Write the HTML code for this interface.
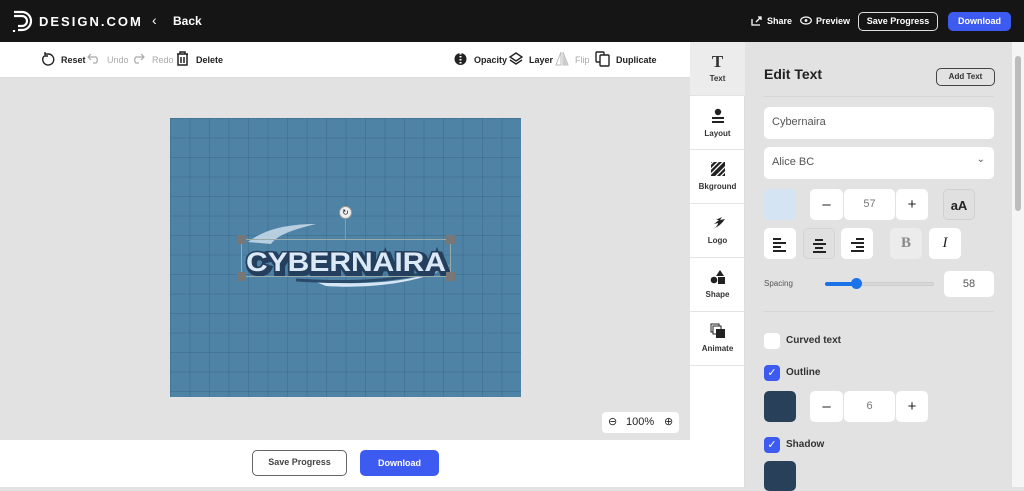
<!DOCTYPE html>
<html><head><meta charset="utf-8"><style>
*{box-sizing:border-box;margin:0;padding:0}
body{width:1024px;height:487px;overflow:hidden;font-family:"Liberation Sans",sans-serif;background:#e2e2e2;position:relative;font-size:11px;color:#222}
.a{position:absolute}
.top{left:0;top:0;width:1024px;height:42px;background:#151515;color:#fff}
.tb{left:0;top:42px;width:690px;height:36px;background:#fff;border-bottom:1px solid #ddd}
.tb span{position:absolute;top:13px;font-size:9px;font-weight:bold}
.canvas{left:170px;top:118px;width:351px;height:279px;background-color:#4f83a6;background-image:linear-gradient(rgba(40,80,110,.25) 1px,transparent 1px),linear-gradient(90deg,rgba(40,80,110,.25) 1px,transparent 1px);background-size:19.5px 19.5px}
.bot{left:0;top:440px;width:690px;height:47px;background:#fff}
.side{left:690px;top:42px;width:55px;height:445px;background:#fff;border-right:1px solid #ddd}
.tab{position:absolute;left:0;width:55px;height:54px;border-bottom:1px solid #e3e3e3;text-align:center;font-size:8px;font-weight:bold;color:#333}
.panel{left:745px;top:42px;width:267px;height:445px;background:#e2e2e2}
.box{position:absolute;background:#fff;border-radius:5px}
.btn{position:absolute;background:#fff;border-radius:5px;text-align:center;font-size:15px}
.cb{position:absolute;width:16px;height:16px;border-radius:4px;background:#3d5af1;color:#fff;font-size:11px;text-align:center;line-height:16px}
.al{position:absolute;left:9px;height:1.5px;background:#222}
</style></head><body>
<div class="a top">
 <svg class="a" style="left:12px;top:10px" width="22" height="24" viewBox="0 0 22 24"><path d="M2 2h8a9 9 0 0 1 0 18H6M2 6h8a5 5 0 0 1 0 10H6M2 20v2" fill="none" stroke="#fff" stroke-width="2.2"/></svg>
 <div class="a" style="left:39px;top:14px;font-size:13px;letter-spacing:2px;font-weight:bold">DESIGN.COM</div>
 <div class="a" style="left:152px;top:12px;font-size:14px">‹</div>
 <div class="a" style="left:173px;top:14px;font-size:12px;font-weight:bold">Back</div>
 <svg class="a" style="left:751px;top:16px" width="11" height="10"><path d="M1 3v6h8M5 6l5-5M7 1h3v3" fill="none" stroke="#fff" stroke-width="1.3"/></svg>
 <div class="a" style="left:767px;top:16px;font-size:9px;font-weight:bold">Share</div>
 <svg class="a" style="left:800px;top:16px" width="12" height="9"><ellipse cx="6" cy="4.5" rx="5.3" ry="3.5" fill="none" stroke="#fff" stroke-width="1.2"/><circle cx="6" cy="4.5" r="1.4" fill="#fff"/></svg>
 <div class="a" style="left:816px;top:16px;font-size:9px;font-weight:bold">Preview</div>
 <div class="a" style="left:858px;top:12px;width:80px;height:19px;border:1.5px solid #ddd;border-radius:5px;font-size:9px;font-weight:bold;text-align:center;line-height:16px">Save Progress</div>
 <div class="a" style="left:948px;top:12px;width:63px;height:19px;background:#3d5af1;border-radius:5px;font-size:9px;font-weight:bold;text-align:center;line-height:19px">Download</div>
</div>
<div class="a tb">
 <svg class="a" style="left:41px;top:10px" width="14" height="14"><path d="M3 4A5.5 5.5 0 1 0 7 2H4M4 0v4h3" fill="none" stroke="#222" stroke-width="1.4"/></svg>
 <span style="left:61px">Reset</span>
 <svg class="a" style="left:87px;top:11px" width="14" height="11"><path d="M4 1L1 4l3 3M1 4h8a4 4 0 0 1 0 6H6" fill="none" stroke="#aaa" stroke-width="1.2"/></svg>
 <span style="left:107px;color:#aaa;font-weight:normal">Undo</span>
 <svg class="a" style="left:131px;top:11px" width="14" height="11"><path d="M10 1l3 3-3 3M13 4H5a4 4 0 0 0 0 6h3" fill="none" stroke="#aaa" stroke-width="1.2"/></svg>
 <span style="left:152px;color:#aaa;font-weight:normal">Redo</span>
 <svg class="a" style="left:176px;top:9px" width="13" height="15"><path d="M1 3h11M4 3V1h5v2M2 3v11h9V3M5 6v6M8 6v6" fill="none" stroke="#222" stroke-width="1.5"/></svg>
 <span style="left:196px">Delete</span>
 <svg class="a" style="left:454px;top:10px" width="13" height="14"><circle cx="6.5" cy="7" r="6" fill="#222"/><path d="M6.5 1v12" stroke="#fff" stroke-dasharray="1.5 1.5" stroke-width="2"/></svg>
 <span style="left:474px">Opacity</span>
 <svg class="a" style="left:509px;top:10px" width="14" height="14"><path d="M7 1l6 4-6 4-6-4zM1 8l6 4 6-4" fill="none" stroke="#222" stroke-width="1.4"/></svg>
 <span style="left:529px">Layer</span>
 <svg class="a" style="left:555px;top:9px" width="14" height="15"><path d="M6 1v13H1zM8 1v13h5z" fill="none" stroke="#bbb" stroke-width="1"/><path d="M8 1v13h5z" fill="#ccc"/></svg>
 <span style="left:575px;color:#aaa;font-weight:normal">Flip</span>
 <svg class="a" style="left:595px;top:9px" width="15" height="16"><rect x="1" y="1" width="8" height="10" rx="1" fill="none" stroke="#222" stroke-width="1.4"/><rect x="5" y="4" width="9" height="11" rx="1" fill="#fff" stroke="#222" stroke-width="1.4"/></svg>
 <span style="left:616px">Duplicate</span>
</div>
<div class="a canvas"></div>
<svg class="a" style="left:236px;top:220px" width="230" height="70">
 <path d="M12 22 C30 8 55 4 80 4 C55 10 40 16 35 24Z" fill="#dbe8f5" opacity=".75"/>
 <path d="M80 62 C140 66 190 60 215 44 C200 57 150 70 90 66Z" fill="#d6e6f5"/>
 <path d="M60 60 C120 64 170 60 205 48" stroke="#2a4a6a" stroke-width="3" fill="none"/>
 <text x="110" y="51" text-anchor="middle" textLength="200" lengthAdjust="spacingAndGlyphs" font-family="Liberation Sans,sans-serif" font-weight="bold" font-size="27" fill="#243f5e" stroke="#243f5e" stroke-width="6" transform="translate(2,2)">CYBERNAIRA</text>
 <text x="110" y="51" text-anchor="middle" textLength="200" lengthAdjust="spacingAndGlyphs" font-family="Liberation Sans,sans-serif" font-weight="bold" font-size="27" fill="#dbe8f5" stroke="#243f5e" stroke-width="3" paint-order="stroke">CYBERNAIRA</text>
</svg>
<div class="a" style="left:241px;top:239px;width:210px;height:38px;border:1px solid #9aa"></div>
<div class="a" style="left:345px;top:217px;width:1px;height:22px;background:#999"></div>
<div class="a" style="left:339px;top:206px;width:13px;height:13px;border-radius:50%;background:#eee;border:1px solid #999;font-size:8px;text-align:center;line-height:11px">↻</div>
<div class="a" style="left:237px;top:235px;width:9px;height:9px;background:#777"></div>
<div class="a" style="left:446px;top:235px;width:9px;height:9px;background:#777"></div>
<div class="a" style="left:237px;top:272px;width:9px;height:9px;background:#777"></div>
<div class="a" style="left:446px;top:272px;width:9px;height:9px;background:#777"></div>
<div class="a" style="left:602px;top:412px;width:77px;height:21px;background:#fff;border-radius:4px;font-size:11px;line-height:21px">
 <span class="a" style="left:6px;font-size:11px">⊖</span><span class="a" style="left:24px">100%</span><span class="a" style="left:62px">⊕</span></div>
<div class="a bot">
 <div class="a" style="left:252px;top:10px;width:95px;height:26px;border:1.5px solid #666;border-radius:5px;font-size:9px;font-weight:bold;color:#444;text-align:center;line-height:23px">Save Progress</div>
 <div class="a" style="left:360px;top:10px;width:79px;height:26px;background:#3d5af1;border-radius:5px;font-size:9px;font-weight:bold;color:#fff;text-align:center;line-height:26px">Download</div>
</div>
<div class="a side">
 <div class="tab" style="top:0;background:#ececec"><div style="font-size:17px;font-family:'Liberation Serif',serif;margin-top:10px;height:22px">T</div>Text</div>
 <div class="tab" style="top:54px"><svg style="margin-top:12px" width="14" height="16"><circle cx="7" cy="4" r="3.2" fill="#222"/><rect x="1" y="9" width="12" height="2" fill="#222"/><rect x="1" y="13" width="12" height="2" fill="#222"/></svg><div style="margin-top:3px">Layout</div></div>
 <div class="tab" style="top:108px"><svg style="margin-top:12px" width="14" height="14"><rect width="14" height="14" fill="#222"/><path d="M-2 4L4-2M-2 9L9-2M-2 14L14-2M3 16L16 3M8 16L16 8M13 16L16 13" stroke="#fff" stroke-width="1.3"/></svg><div style="margin-top:4px">Bkground</div></div>
 <div class="tab" style="top:162px"><svg style="margin-top:12px" width="16" height="14"><path d="M2 13C6 12 8 9 8 7L4 8 9 4 6 4 12 1 10 4 15 3C12 7 9 11 2 13Z" fill="#222"/></svg><div style="margin-top:4px">Logo</div></div>
 <div class="tab" style="top:216px"><svg style="margin-top:11px" width="16" height="16"><path d="M10 1l4 6H6z" fill="#222"/><circle cx="4" cy="11" r="3.3" fill="#222"/><rect x="8" y="8" width="7" height="7" fill="#222"/></svg><div style="margin-top:3px">Shape</div></div>
 <div class="tab" style="top:270px"><svg style="margin-top:11px" width="16" height="16"><rect x="1" y="1" width="8" height="8" fill="none" stroke="#222"/><rect x="3" y="3" width="8" height="8" fill="#fff" stroke="#222"/><rect x="6" y="6" width="9" height="9" fill="#222"/></svg><div style="margin-top:3px">Animate</div></div>
</div>
<div class="a panel">
 <div class="a" style="left:19px;top:24px;font-size:14px;font-weight:bold">Edit Text</div>
 <div class="a" style="left:191px;top:26px;width:59px;height:18px;border:1.3px solid #444;border-radius:5px;font-size:8px;font-weight:bold;text-align:center;line-height:15px;color:#333">Add Text</div>
 <div class="a" style="left:19px;top:54px;width:230px;height:1px;background:#d6d6d6"></div>
 <div class="box" style="left:19px;top:65px;width:230px;height:32px;font-size:11px;color:#555;padding:9px 8px">Cybernaira</div>
 <div class="box" style="left:19px;top:105px;width:230px;height:32px;font-size:11px;color:#555;padding:9px 8px">Alice BC<span style="position:absolute;right:9px;top:7px;font-size:10px">⌄</span></div>
 <div class="box" style="left:19px;top:147px;width:32px;height:31px;background:#d5e4f2"></div>
 <div class="btn" style="left:65px;top:147px;width:33px;height:31px;line-height:31px">–</div>
 <div class="btn" style="left:99px;top:147px;width:51px;height:31px;line-height:31px;font-size:11px;color:#777">57</div>
 <div class="btn" style="left:151px;top:147px;width:32px;height:31px;line-height:31px">+</div>
 <div class="btn" style="left:198px;top:147px;width:32px;height:31px;line-height:31px;background:#e0e0e0;border:1px solid #d0d0d0;font-size:13px;font-weight:bold">aA</div>
 <div class="btn" style="left:19px;top:186px;width:32px;height:31px"><div class="al" style="top:10px;width:8px"></div><div class="al" style="top:14px;width:13px"></div><div class="al" style="top:18px;width:8px"></div><div class="al" style="top:22px;width:13px"></div></div>
 <div class="btn" style="left:58px;top:186px;width:32px;height:31px;background:#e0e0e0;border:1px solid #d4d4d4"><div class="al" style="top:10px;width:8px;left:11px"></div><div class="al" style="top:14px;width:13px"></div><div class="al" style="top:18px;width:8px;left:11px"></div><div class="al" style="top:22px;width:13px"></div></div>
 <div class="btn" style="left:96px;top:186px;width:32px;height:31px"><div class="al" style="top:10px;width:8px;left:15px"></div><div class="al" style="top:14px;width:13px;left:10px"></div><div class="al" style="top:18px;width:8px;left:15px"></div><div class="al" style="top:22px;width:13px;left:10px"></div></div>
 <div class="btn" style="left:145px;top:186px;width:32px;height:31px;line-height:31px;background:#ececec;color:#888;font-family:'Liberation Serif',serif;font-weight:bold">B</div>
 <div class="btn" style="left:184px;top:186px;width:32px;height:31px;line-height:31px;font-family:'Liberation Serif',serif;font-style:italic">I</div>
 <div class="a" style="left:19px;top:237px;font-size:8px;color:#555">Spacing</div>
 <div class="a" style="left:80px;top:240px;width:109px;height:4px;background:#d8d8d8;border-radius:2px;border:1px solid #ccc"></div>
 <div class="a" style="left:80px;top:240px;width:31px;height:4px;background:#1a73e8;border-radius:2px"></div>
 <div class="a" style="left:106px;top:236px;width:11px;height:11px;background:#1a73e8;border-radius:50%"></div>
 <div class="box" style="left:199px;top:229px;width:50px;height:26px;font-size:11px;color:#555;text-align:center;line-height:26px">58</div>
 <div class="a" style="left:19px;top:269px;width:230px;height:1px;background:#d6d6d6"></div>
 <div class="box" style="left:19px;top:291px;width:16px;height:16px;border-radius:4px"></div>
 <div class="a" style="left:41px;top:293px;font-size:10px;font-weight:bold;color:#333">Curved text</div>
 <div class="cb" style="left:19px;top:323px">✓</div>
 <div class="a" style="left:41px;top:325px;font-size:10px;font-weight:bold;color:#333">Outline</div>
 <div class="box" style="left:19px;top:349px;width:32px;height:31px;background:#284059"></div>
 <div class="btn" style="left:65px;top:349px;width:33px;height:31px;line-height:31px">–</div>
 <div class="btn" style="left:99px;top:349px;width:51px;height:31px;line-height:31px;font-size:11px;color:#777">6</div>
 <div class="btn" style="left:151px;top:349px;width:32px;height:31px;line-height:31px">+</div>
 <div class="cb" style="left:19px;top:395px">✓</div>
 <div class="a" style="left:41px;top:397px;font-size:10px;font-weight:bold;color:#333">Shadow</div>
 <div class="box" style="left:19px;top:419px;width:32px;height:30px;background:#284059"></div>
</div>
<div class="a" style="left:1012px;top:42px;width:12px;height:445px;background:#f5f5f5">
 <div class="a" style="left:3px;top:14px;width:6px;height:155px;background:#bdbdbd;border-radius:3px"></div>
</div>
</body></html>
